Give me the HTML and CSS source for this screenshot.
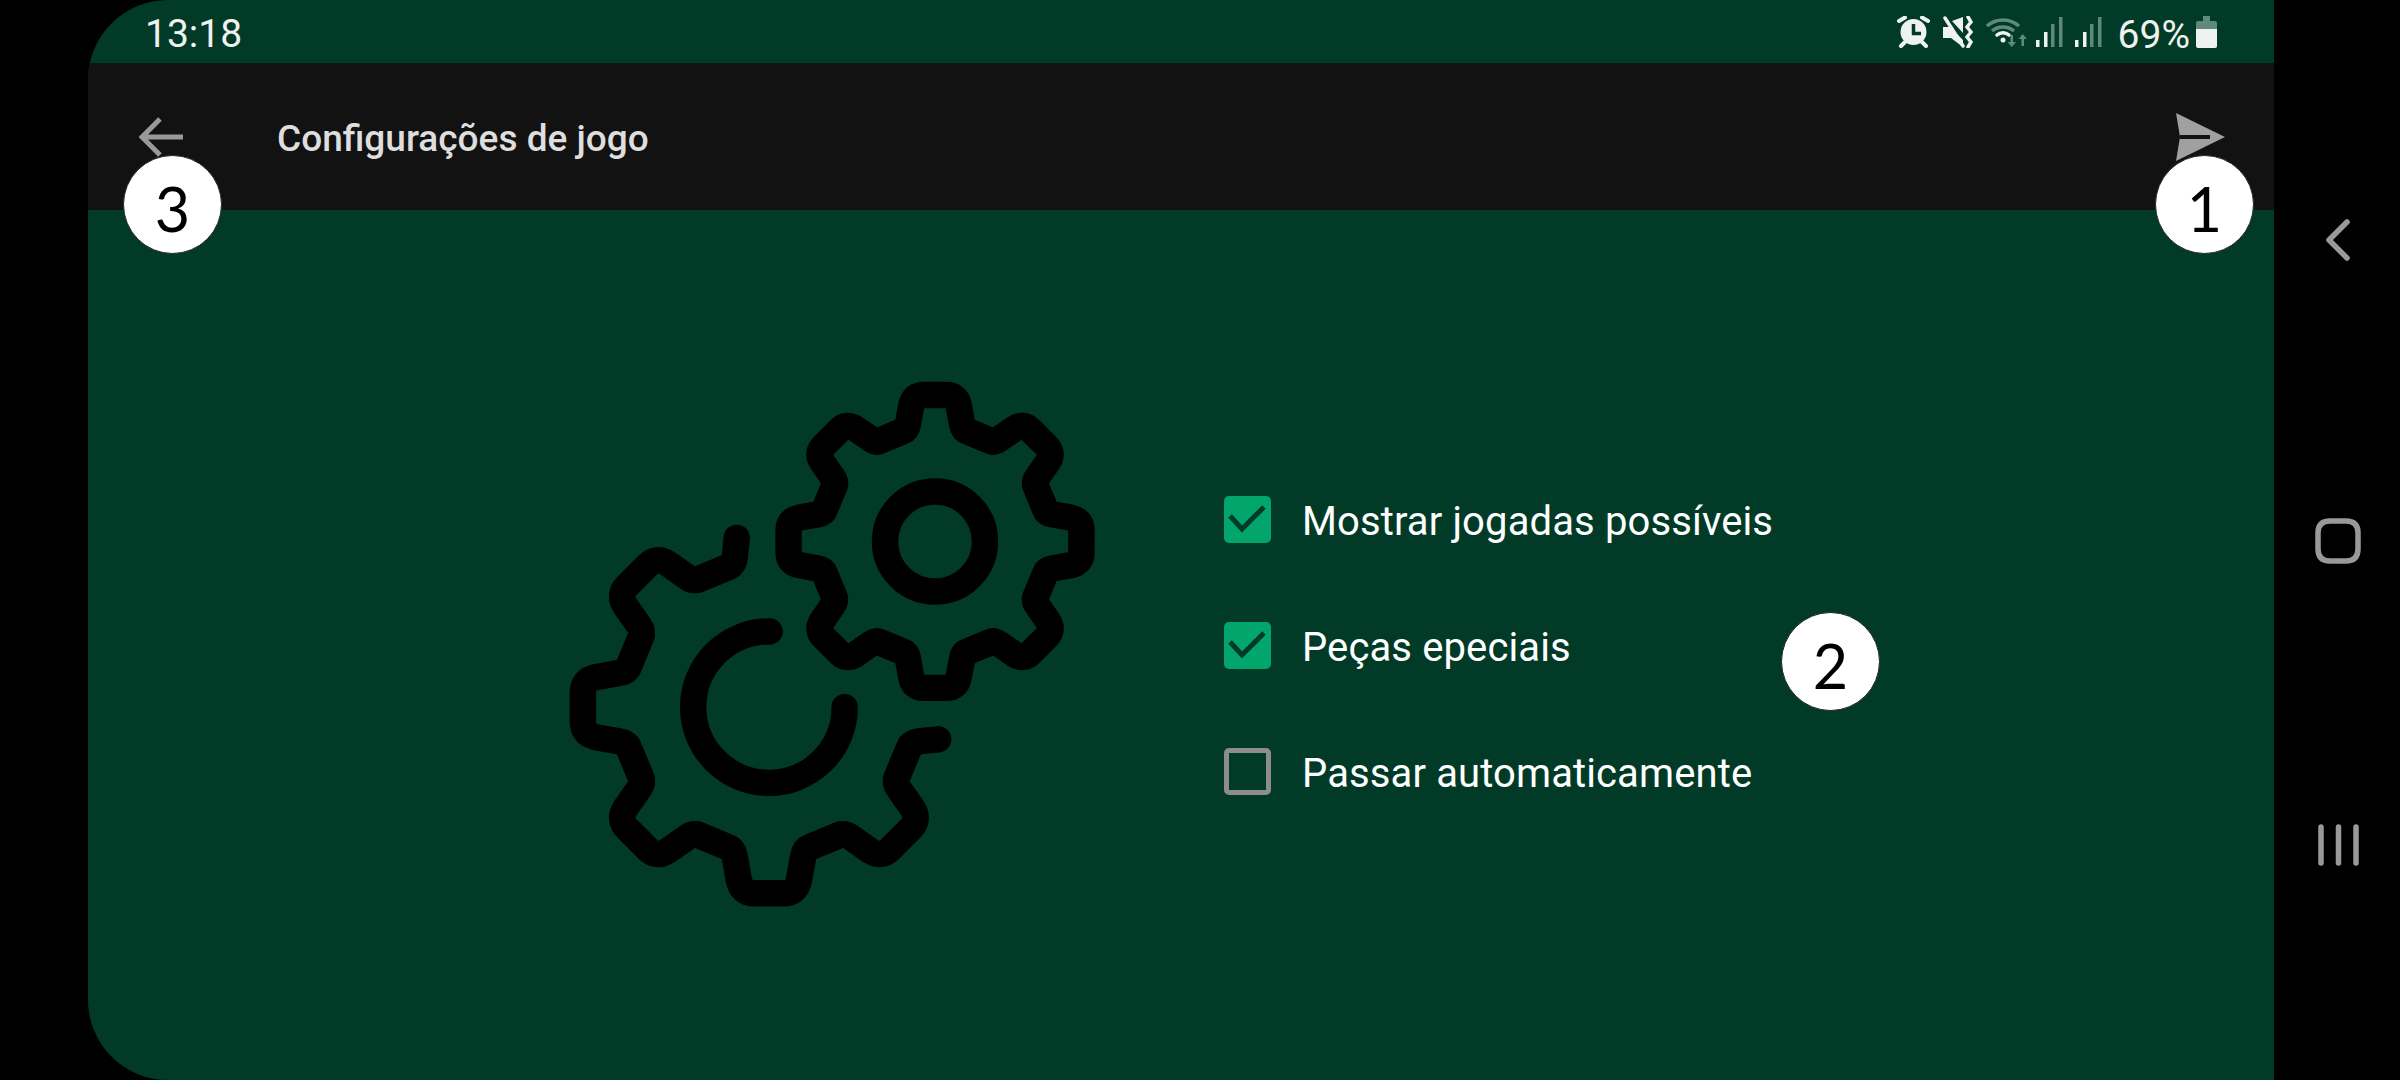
FILE: index.html
```html
<html>

<head>
    <title>Configurações de jogo</title>
    <link rel="stylesheet" href="styles.css">
</head>

<body>
    <div class="edge"></div>

    <div class="screen">
        <div class="statusbar">
            <span class="time">13:18</span>
            <div class="status-icons">
                <svg class="icon-alarm" width="33" height="32" viewBox="0 0 33 32">
                    <path class="bright-line ear" d="M2 5 L8 1.5 M31 5 L25 1.5 M4 30 L8 26 M29 30 L25 26" />
                    <circle class="bright" cx="16.5" cy="16" r="13" />
                    <path class="hand" d="M16.5 8 V17.5 H24" />
                </svg>
                <svg class="icon-mute" width="30" height="32" viewBox="0 0 30 32">
                    <path class="bright" d="M0 11 H7 L20 24 V31 L8 22 H0 Z M9 5 L20 1 V17 Z" />
                    <path class="bright-line thin" d="M2 2 L20 30" />
                    <path class="bright-line thin" d="M25 1 L28 6 L24 11 L28 16 L24 21 L28 26 L25 31" />
                </svg>
                <svg class="icon-wifi" width="42" height="32" viewBox="0 0 42 32">
                    <path class="dim-line" d="M1 10 A24 24 0 0 1 33 10 M6 15 A17 17 0 0 1 28 15" />
                    <path class="bright-line thin" d="M11 19 A9 9 0 0 1 23 19" />
                    <circle class="bright" cx="17" cy="24" r="2.5" />
                    <path class="dim" d="M24.5 19 H27 V26 H30 L25.8 31 L21.5 26 H24.5 Z M36.7 18 L40.8 23 H38 V30 H35.5 V23 H32.5 Z" />
                </svg>
                <svg width="27" height="32" viewBox="0 0 27 32">
                    <rect class="bright" x="0" y="24" width="3.5" height="7" />
                    <rect class="bright" x="8" y="16" width="3.5" height="15" />
                    <rect class="dim" x="15" y="8" width="3.5" height="23" />
                    <rect class="dim" x="23" y="1" width="3.5" height="30" />
                </svg>
                <svg width="27" height="32" viewBox="0 0 27 32">
                    <rect class="bright" x="0" y="24" width="3.5" height="7" />
                    <rect class="bright" x="8" y="16" width="3.5" height="15" />
                    <rect class="dim" x="15" y="8" width="3.5" height="23" />
                    <rect class="dim" x="23" y="1" width="3.5" height="30" />
                </svg>
                <span class="battery-text">69%</span>
                <svg class="icon-battery" width="21" height="32" viewBox="0 0 21 32">
                    <path class="dim" d="M7 0 H14 V5 H19 Q21 5 21 7 V13 H0 V7 Q0 5 2 5 H7 Z" />
                    <path class="bright" d="M0 13 H21 V30 Q21 32 19 32 H2 Q0 32 0 30 Z" />
                </svg>
            </div>
        </div>

        <div class="toolbar">
            <svg class="back" width="44" height="40" viewBox="0 0 44 40">
                <path d="M21 2 L3 20 L21 38 M3 20 H44" />
            </svg>
            <span class="title">Configurações de jogo</span>
            <svg class="send" width="49" height="48" viewBox="0 0 49 48">
                <path class="plane" d="M0 0 L49 24 L0 48 L4 24 Z" />
                <path class="slit" d="M4 24 H34" />
            </svg>
        </div>

        <div class="content">
            <svg class="gears" width="560" height="560" viewBox="0 0 1568 1568">
                <defs>
                    <path id="small-tooth" d="M-160 -280 L-92 -308 Q-78 -313 -76 -328 L-66 -382 Q-60 -410 -32 -410 L32 -410 Q60 -410 66 -382 L76 -328 Q78 -313 92 -308 L160 -280" />
                    <path id="big-tooth" d="M-203 -356 L-117 -391 Q-99 -398 -96 -417 L-84 -485 Q-76 -521 -41 -521 L41 -521 Q76 -521 84 -485 L96 -417 Q99 -398 117 -391 L203 -356" />
                </defs>
                <g transform="translate(1078 508)">
                    <use href="#small-tooth" />
                    <use href="#small-tooth" transform="rotate(45)" />
                    <use href="#small-tooth" transform="rotate(90)" />
                    <use href="#small-tooth" transform="rotate(135)" />
                    <use href="#small-tooth" transform="rotate(180)" />
                    <use href="#small-tooth" transform="rotate(225)" />
                    <use href="#small-tooth" transform="rotate(270)" />
                    <use href="#small-tooth" transform="rotate(315)" />
                    <circle r="140" />
                </g>
                <g transform="translate(613 972)">
                    <path d="M-90 -474 L-96 -417 Q-99 -398 -117 -391 L-203 -356" />
                    <use href="#big-tooth" transform="rotate(315)" />
                    <use href="#big-tooth" transform="rotate(270)" />
                    <use href="#big-tooth" transform="rotate(225)" />
                    <use href="#big-tooth" transform="rotate(180)" />
                    <use href="#big-tooth" transform="rotate(135)" />
                    <path d="M356 203 L391 117 Q398 99 417 96 L474 90" />
                    <path d="M2 -212 A212 212 0 1 0 212 0" />
                </g>
            </svg>

            <div class="options">
                <div class="option">
                    <span class="checkbox checked">
                        <svg width="47" height="47" viewBox="0 0 47 47"><path d="M6 20 L18 33 L40 11" /></svg>
                    </span>
                    <span class="label">Mostrar jogadas possíveis</span>
                </div>
                <div class="option">
                    <span class="checkbox checked">
                        <svg width="47" height="47" viewBox="0 0 47 47"><path d="M6 20 L18 33 L40 11" /></svg>
                    </span>
                    <span class="label">Peças epeciais</span>
                </div>
                <div class="option">
                    <span class="checkbox"></span>
                    <span class="label">Passar automaticamente</span>
                </div>
            </div>
        </div>

        <div class="badge badge-back">3</div>
        <div class="badge badge-send">1</div>
        <div class="badge badge-options">2</div>
    </div>

    <div class="navbar">
        <svg class="nav-icon" width="60" height="60" viewBox="0 0 60 60">
            <path d="M39 12 L21 30 L39 48" />
        </svg>
        <svg class="nav-icon" width="60" height="60" viewBox="0 0 60 60">
            <path d="M22 10 H38 Q50 10 50 22 V38 Q50 50 38 50 H22 Q10 50 10 38 V22 Q10 10 22 10 Z" />
        </svg>
        <svg class="nav-icon recents" width="60" height="60" viewBox="0 0 60 60">
            <path d="M13 12 V48 M30.5 12 V48 M48 12 V48" />
        </svg>
    </div>
</body>

</html>
```

FILE: styles.css
```css
:root {
    --bg: #013b28;
    --bar: #121212;
    --green: #02a56b;
    --bright: #eef2f0;
    --dim: #5f8a7a;
    --grey: #999999;
}

* {
    box-sizing: border-box;
}

body {
    margin: 0;
    width: 2400px;
    height: 1080px;
    display: flex;
    overflow: hidden;
    background-color: black;
    font-family: Roboto, sans-serif;
}

svg {
    display: block;
}

.edge {
    width: 88px;
}

.screen {
    position: relative;
    width: 2186px;
    display: flex;
    flex-direction: column;
    overflow: hidden;
    background-color: var(--bg);
    border-radius: 80px 0 0 80px;
}

.statusbar {
    height: 63px;
    flex-shrink: 0;
    display: flex;
    justify-content: space-between;
    align-items: center;
    padding: 5px 57px 0;
    color: var(--bright);
    font-size: 39px;
}

.status-icons {
    display: flex;
    align-items: center;
    margin-top: -4px;
}

.icon-alarm {
    margin-right: 13px;
}

.icon-mute {
    margin-right: 13px;
}

.icon-wifi {
    margin-right: 8px;
}

.icon-wifi + svg {
    margin-right: 12px;
}

.battery-text {
    padding-top: 5px;
    margin-left: 16px;
    margin-right: 6px;
}

.bright {
    fill: var(--bright);
}

.dim {
    fill: var(--dim);
}

.bright-line {
    fill: none;
    stroke: var(--bright);
    stroke-width: 5;
    stroke-linecap: round;
}

.ear {
    stroke-width: 4;
}

.thin {
    stroke-width: 3.5;
}

.dim-line {
    fill: none;
    stroke: var(--dim);
    stroke-width: 3.5;
}

.hand {
    fill: none;
    stroke: var(--bg);
    stroke-width: 3.5;
}

.toolbar {
    height: 147px;
    flex-shrink: 0;
    display: flex;
    align-items: center;
    padding: 0 49px 0 51px;
    background-color: var(--bar);
}

.back {
    margin-right: 94px;
    fill: none;
    stroke: var(--grey);
    stroke-width: 5;
}

.title {
    flex: 1;
    padding-top: 3px;
    color: #dedede;
    font-size: 37px;
    font-weight: 500;
}

.plane {
    fill: #a0a0a0;
}

.slit {
    stroke: var(--bar);
    stroke-width: 4;
}

.content {
    display: flex;
    gap: 114px;
    padding: 150px 0 0 462px;
}

.gears {
    flex-shrink: 0;
    fill: none;
    stroke: black;
    stroke-width: 74;
    stroke-linecap: round;
    stroke-linejoin: round;
}

.options {
    display: flex;
    flex-direction: column;
    gap: 79px;
    margin-top: 136px;
    color: white;
    font-size: 40px;
    letter-spacing: 0.12px;
}

.option {
    height: 47px;
    display: flex;
    align-items: center;
    gap: 31px;
}

.label {
    padding-top: 3px;
}

.checkbox {
    width: 47px;
    height: 47px;
    flex-shrink: 0;
    border: 5px solid #8d8d8d;
    border-radius: 5px;
}

.checked {
    border: none;
    background-color: var(--green);
}

.checked path {
    fill: none;
    stroke: var(--bg);
    stroke-width: 5;
}

.badge {
    position: absolute;
    top: 155px;
    width: 99px;
    height: 99px;
    display: flex;
    justify-content: center;
    align-items: center;
    padding-top: 8px;
    background-color: white;
    border: 1px solid #222222;
    border-radius: 50%;
    color: black;
    font-family: Lato, sans-serif;
    font-size: 61px;
}

.badge-back {
    left: 35px;
}

.badge-send {
    left: 2067px;
}

.badge-options {
    left: 1693px;
    top: 612px;
}

.navbar {
    width: 126px;
    display: flex;
    flex-direction: column;
    align-items: center;
    gap: 241px;
    padding: 210px 0 0 2px;
}

.nav-icon {
    fill: none;
    stroke: var(--grey);
    stroke-width: 5.5;
    stroke-linecap: round;
    stroke-linejoin: round;
}

.recents {
    margin-top: 3px;
}
```
